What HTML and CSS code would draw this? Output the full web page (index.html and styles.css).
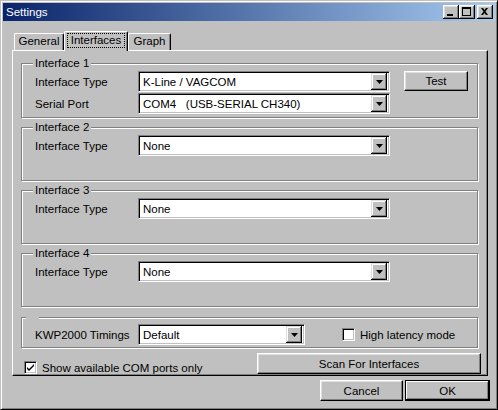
FILE: index.html
```html
<!doctype html>
<html lang="ja">
<head>
<meta charset="utf-8">
<title>Settings</title>
<link rel="stylesheet" href="styles.css">
</head>
<body>

<div class="window">

	<div class="titlebar">
		<span class="title">Settings</span>
		<div class="caps">
			<span class="cap"><svg width="16" height="14" viewBox="0 0 16 14"><rect x="4" y="9" width="6" height="2" fill="#000"/></svg></span>
			<span class="cap"><svg width="16" height="14" viewBox="0 0 16 14"><path d="M3 2h9v9h-9z M4 4v6h7v-6z" fill="#000" fill-rule="evenodd"/></svg></span>
			<span class="cap close"><svg width="16" height="14" viewBox="0 0 16 14"><path d="M4 3h2l1.5 2 1.5-2h2l-2.5 3.5 2.5 3.5h-2l-1.5-2-1.5 2h-2l2.5-3.5z" fill="#000"/></svg></span>
		</div>
	</div>

	<div class="body">

		<div class="tabs">
			<div class="tab t-general">General</div>
			<div class="tab t-ifaces on"><span class="focus">Interfaces</span></div>
			<div class="tab t-graph">Graph</div>
		</div>

		<div class="panel">

			<div class="group g1">
				<div class="legend">Interface 1</div>
				<div class="row">
					<span class="lbl">Interface Type</span>
					<div class="combo"><span class="val">K-Line / VAGCOM</span><span class="drop"><svg width="7" height="4" viewBox="0 0 7 4"><path d="M0 0h7l-3.5 4z" fill="#000"/></svg></span></div>
					<button class="btn test">Test</button>
				</div>
				<div class="row second">
					<span class="lbl">Serial Port</span>
					<div class="combo"><span class="val">COM4&nbsp;&nbsp;&nbsp;(USB-SERIAL CH340)</span><span class="drop"><svg width="7" height="4" viewBox="0 0 7 4"><path d="M0 0h7l-3.5 4z" fill="#000"/></svg></span></div>
				</div>
			</div>

			<div class="group">
				<div class="legend">Interface 2</div>
				<div class="row">
					<span class="lbl">Interface Type</span>
					<div class="combo"><span class="val">None</span><span class="drop"><svg width="7" height="4" viewBox="0 0 7 4"><path d="M0 0h7l-3.5 4z" fill="#000"/></svg></span></div>
				</div>
			</div>

			<div class="group">
				<div class="legend">Interface 3</div>
				<div class="row">
					<span class="lbl">Interface Type</span>
					<div class="combo"><span class="val">None</span><span class="drop"><svg width="7" height="4" viewBox="0 0 7 4"><path d="M0 0h7l-3.5 4z" fill="#000"/></svg></span></div>
				</div>
			</div>

			<div class="group">
				<div class="legend">Interface 4</div>
				<div class="row">
					<span class="lbl">Interface Type</span>
					<div class="combo"><span class="val">None</span><span class="drop"><svg width="7" height="4" viewBox="0 0 7 4"><path d="M0 0h7l-3.5 4z" fill="#000"/></svg></span></div>
				</div>
			</div>

			<div class="group kwp">
				<div class="row">
					<span class="lbl">KWP2000 Timings</span>
					<div class="combo short"><span class="val">Default</span><span class="drop"><svg width="7" height="4" viewBox="0 0 7 4"><path d="M0 0h7l-3.5 4z" fill="#000"/></svg></span></div>
					<label class="check latency"><span class="box"></span>High latency mode</label>
				</div>
			</div>

			<div class="bottom">
				<label class="check"><span class="box"><svg width="9" height="9" viewBox="0 0 9 9"><path d="M1 3l2 2 5-5v2l-5 5-2-2z" fill="#000"/></svg></span>Show available COM ports only</label>
				<button class="btn scan">Scan For Interfaces</button>
			</div>

		</div>

		<div class="footer">
			<button class="btn cancel">Cancel</button>
			<button class="btn ok">OK</button>
		</div>

	</div>

</div>

</body>
</html>
```

FILE: styles.css
```css
body {margin:0;padding:0;}

.window {
	width:498px; height:410px;
	box-sizing:border-box;
	padding:2px;
	background:#c0c0c0;
	border:1px solid;
	border-color:#c0c0c0 #000 #000 #c0c0c0;
	box-shadow:inset 1px 1px 0 #fff, inset -1px -1px 0 #808080;
	font-family:"Liberation Sans", Arial, sans-serif;
	font-size:11.5px;
	color:#000;
}

/* title bar */

.titlebar {
	display:flex;
	align-items:center;
	height:18px;
	padding:0 2px 0 3px;
	background:linear-gradient(to right, #0a246a, #a6caf0);
	color:#fff;
}

.titlebar .title { font-size:11.5px; }

.caps { display:flex; margin-left:auto; }

.cap {
	display:block;
	width:16px; height:14px;
	background:#c0c0c0;
	box-shadow:inset -1px -1px 0 #000, inset 1px 1px 0 #fff, inset -2px -2px 0 #808080, inset 2px 2px 0 #dfdfdf;
}
.cap svg { display:block; }
.cap.close { margin-left:2px; }

.body { padding:10px 7px 0 9px; }

/* tabs */

.tabs {
	display:flex;
	align-items:flex-end;
	padding-left:2px;
}

.tab {
	box-sizing:border-box;
	height:17px;
	line-height:15px;
	text-align:center;
	background:#c0c0c0;
	border-top:1px solid #fff;
	border-left:1px solid #fff;
	border-right:1px solid #000;
	border-radius:2px 2px 0 0;
	box-shadow:inset -1px 0 0 #808080;
}

.t-general { width:50px; }
.t-ifaces { width:64px; }
.t-graph { width:43px; }

.tab.on {
	position:relative; z-index:1;
	height:20px;
	margin-bottom:-1px;
	line-height:17px;
}

.tab .focus {
	display:inline-block;
	line-height:13px;
	padding:0 3px;
	outline:1px dotted #000;
	margin-top:1px;
}

/* panel */

.panel {
	box-sizing:border-box;
	height:326px;
	padding:12px 9px 0 8px;
	border:1px solid;
	border-color:#fff #000 #000 #fff;
	box-shadow:inset -1px -1px 0 #808080;
}

.group {
	box-sizing:border-box;
	height:54px;
	margin-top:9px;
	padding:0 0 0 13px;
	border:1px solid #808080;
	box-shadow:inset 1px 1px 0 #fff, 1px 1px 0 #fff;
}

.group.g1 { height:55px; margin-top:0; }

.legend {
	display:table;
	height:14px;
	line-height:14px;
	margin:-8px 0 1px -2px;
	padding:0 2px;
	background:#c0c0c0;
}

.group.kwp {
	height:31px;
	margin-top:10px;
	padding-top:6px;
}

.group.kwp::before {
	content:"";
	display:block;
	width:13px; height:2px;
	margin:-7px 0 5px -9px;
	background:#c0c0c0;
}

.row {
	display:flex;
	align-items:center;
}
.row.second { margin-top:1px; }

.lbl { width:103px; }

.combo {
	display:flex;
	align-items:center;
	box-sizing:border-box;
	width:252px; height:21px;
	padding:0 2px 0 2px;
	background:#fff;
	border:1px solid;
	border-color:#808080 #fff #fff #808080;
	box-shadow:inset 1px 1px 0 #000, inset -1px -1px 0 #c0c0c0;
}
.combo.short { width:167px; }

.combo .val { flex:1; padding-left:2px; white-space:nowrap; }

.drop {
	display:flex;
	align-items:center;
	justify-content:center;
	box-sizing:border-box;
	width:16px; height:17px;
	background:#c0c0c0;
	box-shadow:inset -1px -1px 0 #000, inset 1px 1px 0 #dfdfdf, inset -2px -2px 0 #808080, inset 2px 2px 0 #fff;
}
.drop svg { display:block; margin-top:1px; }

.btn {
	box-sizing:border-box;
	height:21px;
	padding:0;
	background:#c0c0c0;
	border:1px solid;
	border-color:#fff #000 #000 #fff;
	box-shadow:inset -1px -1px 0 #808080, inset 1px 1px 0 #dfdfdf;
	font-family:inherit;
	font-size:11.5px;
	color:#000;
}

.test { width:64px; height:20px; margin:-1px 0 0 14px; }

/* checkboxes */

.check {
	display:flex;
	align-items:center;
	white-space:nowrap;
}

.check .box {
	display:flex;
	align-items:center;
	justify-content:center;
	box-sizing:border-box;
	width:13px; height:13px;
	margin-right:5px;
	background:#fff;
	border:1px solid;
	border-color:#808080 #fff #fff #808080;
	box-shadow:inset 1px 1px 0 #000, inset -1px -1px 0 #c0c0c0;
}
.check .box svg { display:block; margin-top:1px; }

.latency { margin-left:37px; }

.bottom {
	display:flex;
	align-items:flex-end;
	margin-top:5px;
	padding-left:3px;
}

.scan { width:224px; margin:0 -3px 0 auto; }

/* footer */

.footer {
	display:flex;
	justify-content:flex-end;
	gap:2px;
	margin:4px -2px 0 0;
}

.cancel { width:83px; }

.ok {
	width:85px;
	border:1px solid #000;
	box-shadow:inset -1px -1px 0 #000, inset 1px 1px 0 #fff, inset -2px -2px 0 #808080;
}
```
